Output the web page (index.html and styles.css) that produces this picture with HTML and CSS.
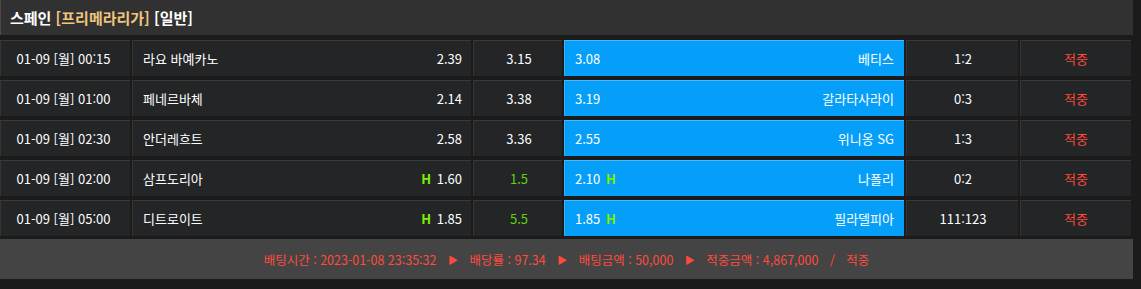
FILE: index.html
```html
<!DOCTYPE html>
<html lang="ko">
<head>
<meta charset="utf-8">
<title>스페인 [프리메라리가] [일반]</title>
<link rel="stylesheet" href="styles.css">
</head>
<body>
<div class="board">
  <div class="league">스페인 <span class="lg">[프리메라리가]</span> [일반]</div>
  <div class="rows">
    <div class="row">
      <div class="cell time">01-09 [월] 00:15</div>
      <div class="cell home"><span>라요 바예카노</span><span class="odd">2.39</span></div>
      <div class="cell draw">3.15</div>
      <div class="cell away sel"><span class="odd">3.08</span><span>베티스</span></div>
      <div class="cell score">1:2</div>
      <div class="cell result">적중</div>
    </div>
    <div class="row">
      <div class="cell time">01-09 [월] 01:00</div>
      <div class="cell home"><span>페네르바체</span><span class="odd">2.14</span></div>
      <div class="cell draw">3.38</div>
      <div class="cell away sel"><span class="odd">3.19</span><span>갈라타사라이</span></div>
      <div class="cell score">0:3</div>
      <div class="cell result">적중</div>
    </div>
    <div class="row">
      <div class="cell time">01-09 [월] 02:30</div>
      <div class="cell home"><span>안더레흐트</span><span class="odd">2.58</span></div>
      <div class="cell draw">3.36</div>
      <div class="cell away sel"><span class="odd">2.55</span><span>위니옹 SG</span></div>
      <div class="cell score">1:3</div>
      <div class="cell result">적중</div>
    </div>
    <div class="row">
      <div class="cell time">01-09 [월] 02:00</div>
      <div class="cell home"><span>삼프도리아</span><span class="odd"><b class="h">H</b> 1.60</span></div>
      <div class="cell draw green">1.5</div>
      <div class="cell away sel"><span class="odd">2.10 <b class="h">H</b></span><span>나폴리</span></div>
      <div class="cell score">0:2</div>
      <div class="cell result">적중</div>
    </div>
    <div class="row">
      <div class="cell time">01-09 [월] 05:00</div>
      <div class="cell home"><span>디트로이트</span><span class="odd"><b class="h">H</b> 1.85</span></div>
      <div class="cell draw green">5.5</div>
      <div class="cell away sel"><span class="odd">1.85 <b class="h">H</b></span><span>필라델피아</span></div>
      <div class="cell score">111:123</div>
      <div class="cell result">적중</div>
    </div>
  </div>
  <div class="summary">배팅시간 : 2023-01-08 23:35:32 <span class="arr">▶</span> 배당률 : 97.34 <span class="arr">▶</span> 배팅금액 : 50,000 <span class="arr">▶</span> 적중금액 : 4,867,000 <span class="slash">/</span> 적중</div>
</div>
</body>
</html>
```
FILE: styles.css
```css
html, body {
  margin: 0;
  padding: 0;
  background: #1b1b1b;
}
body {
  font-family: "Noto Sans CJK KR", "Noto Sans", sans-serif;
  font-size: 13px;
  color: #ffffff;
  width: 1141px;
  height: 289px;
  overflow: hidden;
}
.board {
  width: 1133px;
}
.league {
  height: 35px;
  box-sizing: border-box;
  background: #313131;
  border-left: 1px solid #4a4a4a;
  padding-left: 9px;
  padding-bottom: 1px;
  display: flex;
  align-items: center;
  font-size: 15px;
  font-weight: bold;
  color: #ffffff;
  white-space: pre;
}
.league .lg {
  color: #f2c57c;
}
.rows {
  margin-top: 5px;
  display: flex;
  flex-direction: column;
  gap: 4px;
}
.row {
  display: grid;
  grid-template-columns: 130px 339px 89px 340px 112px 111px;
  column-gap: 2px;
  height: 36px;
  width: 1131px;
}
.cell {
  box-sizing: border-box;
  background: #242527;
  border-top: 1px solid #3a3a3a;
  border-left: 1px solid #343434;
  display: flex;
  align-items: center;
  white-space: nowrap;
}
.time, .draw, .score, .result {
  justify-content: center;
}
.time {
  padding-right: 4px;
}
.home {
  justify-content: space-between;
  padding: 0 9px 0 10px;
}
.draw {
  padding-left: 2px;
}
.green {
  color: #5fd20c;
}
.h {
  color: #7df000;
  font-weight: bold;
  margin: 0 2px;
}
.sel {
  background: #059ffa;
  border-top: 1px solid #4db9fb;
  border-left: 1px solid #3fb0f6;
  justify-content: space-between;
  padding: 0 10px 0 10px;
}
.score {
  padding-left: 1px;
}
.result {
  color: #ff4b3c;
}
.summary {
  margin-top: 3px;
  height: 40px;
  background: #444444;
  display: flex;
  align-items: center;
  justify-content: center;
  color: #ff4b3c;
  font-size: 12.5px;
  white-space: pre;
}
.arr {
  font-size: 10px;
  margin: 0 8px;
}
.slash {
  margin: 0 8px;
}
```
